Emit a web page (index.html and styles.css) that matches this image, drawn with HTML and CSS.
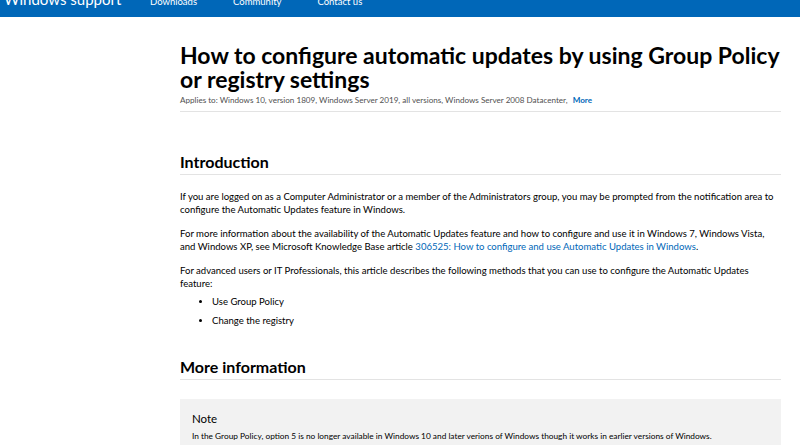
FILE: index.html
```html
<!DOCTYPE html>
<html>
<head>
<meta charset="utf-8">
<link rel="stylesheet" href="styles.css">
</head>
<body>
<header class="topbar">
  <div class="topbar-inner">
    <span class="brand">Windows support</span>
    <nav class="nav">
      <a class="nav-link">Downloads</a>
      <a class="nav-link">Community</a>
      <a class="nav-link">Contact us</a>
    </nav>
  </div>
</header>
<main class="article">
  <h1 class="title">How to configure automatic updates by using Group Policy or registry settings</h1>
  <div class="applies">Applies to: Windows 10, version 1809, Windows Server 2019, all versions, Windows Server 2008 Datacenter, <a class="more">More</a></div>

  <section class="section">
    <h2 class="section-title">Introduction</h2>
    <p class="para para-first">If you are logged on as a Computer Administrator or a member of the Administrators group, you may be prompted from the notification area to configure the Automatic Updates feature in Windows.</p>
    <p class="para">For more information about the availability of the Automatic Updates feature and how to configure and use it in Windows 7, Windows Vista, and Windows XP, see Microsoft Knowledge Base article <a class="link">306525: How to configure and use Automatic Updates in Windows</a>.</p>
    <p class="para">For advanced users or IT Professionals, this article describes the following methods that you can use to configure the Automatic Updates feature:</p>
    <ul class="list">
      <li>Use Group Policy</li>
      <li>Change the registry</li>
    </ul>
  </section>

  <section class="section section-more">
    <h2 class="section-title">More information</h2>
    <div class="note">
      <div class="note-title">Note</div>
      <p class="note-text">In the Group Policy, option 5 is no longer available in Windows 10 and later verions of Windows though it works in earlier versions of Windows.</p>
    </div>
  </section>
</main>
</body>
</html>
```

FILE: styles.css
```css
html, body {
  margin: 0;
  padding: 0;
  background: #fff;
  overflow: hidden;
}
body {
  font-family: Lato, "Open Sans", sans-serif;
  color: #000;
}
.topbar {
  background: #0067b8;
  height: 17px;
  overflow: hidden;
}
.topbar-inner {
  display: flex;
  align-items: baseline;
  margin-top: -12px;
  color: #fff;
}
.brand {
  font-size: 15px;
  line-height: 22px;
  margin-left: 4px;
  width: 146px;
}
.nav {
  display: flex;
  gap: 36px;
}
.nav-link {
  font-size: 9.5px;
  color: #fff;
}
.article {
  margin-left: 180px;
  width: 601px;
}
.title {
  font-size: 23px;
  line-height: 24px;
  font-weight: 700;
  margin: 26px 0 0 0;
}
.applies {
  font-size: 8.1px;
  color: #505050;
  line-height: 14px;
  margin-top: 2px;
  padding-bottom: 4px;
  border-bottom: 1px solid #e3e3e3;
}
.more {
  color: #0067b8;
  font-weight: 700;
  margin-left: 3px;
}
.section {
  margin-top: 40px;
}
.section-more {
  margin-top: 27px;
}
.section-title {
  font-size: 16px;
  font-weight: 700;
  line-height: 20px;
  margin: 0;
  padding-bottom: 2px;
  border-bottom: 1px solid #e3e3e3;
}
.para {
  font-size: 9.55px;
  line-height: 13px;
  margin: 11px 0 0 0;
}
.para-first {
  margin-top: 15px;
}
.link {
  color: #0067b8;
}
.list {
  font-size: 9.55px;
  margin: 2px 0 0 0;
  padding-left: 32px;
}
.list li {
  line-height: 19px;
}
.note {
  margin-top: 19px;
  background: #f2f2f2;
  padding: 12px 12px 12px 12px;
}
.note-title {
  font-size: 11.5px;
  line-height: 16px;
}
.note-text {
  font-size: 8.3px;
  line-height: 12px;
  margin: 3px 0 0 0;
}
```
